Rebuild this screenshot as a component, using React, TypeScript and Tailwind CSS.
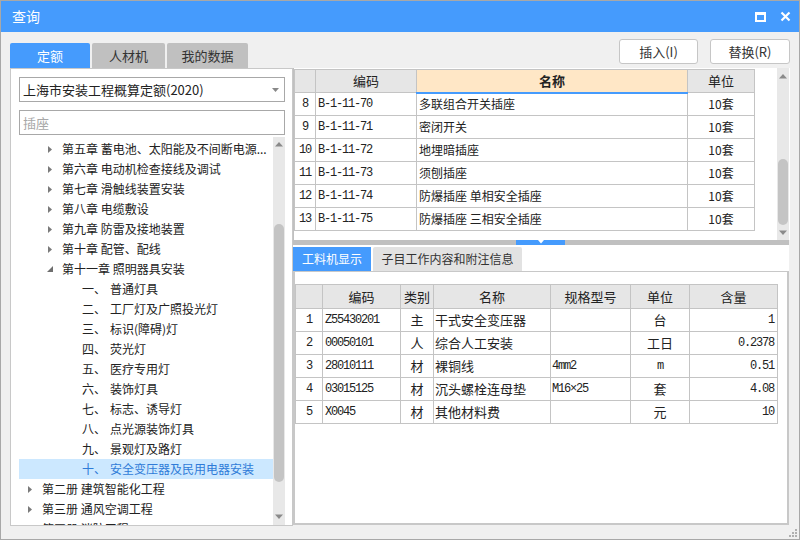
import React from "react";

const CJK = "font-['Microsoft_YaHei','Noto_Sans_CJK_SC',sans-serif]";
const MONO = "font-['Liberation_Mono','Noto_Sans_CJK_SC',monospace] tracking-[-1.2px]";

function Arrow({ open }: { open?: boolean }) {
  if (open)
    return (
      <svg width="8" height="8" viewBox="0 0 8 8" className="block">
        <path d="M7 1 L7 7 L1 7 Z" fill="#6e6e6e" />
      </svg>
    );
  return (
    <svg width="8" height="9" viewBox="0 0 8 9" className="block">
      <path d="M2 1 L6 4.5 L2 8 Z" fill="#7a7a7a" />
    </svg>
  );
}

type Node = { level: number; text: string; arrow?: "closed" | "open"; prefix?: string; sel?: boolean };

const tree: Node[] = [
  { level: 1, text: "第五章 蓄电池、太阳能及不间断电源...", arrow: "closed" },
  { level: 1, text: "第六章 电动机检查接线及调试", arrow: "closed" },
  { level: 1, text: "第七章 滑触线装置安装", arrow: "closed" },
  { level: 1, text: "第八章 电缆敷设", arrow: "closed" },
  { level: 1, text: "第九章 防雷及接地装置", arrow: "closed" },
  { level: 1, text: "第十章 配管、配线", arrow: "closed" },
  { level: 1, text: "第十一章 照明器具安装", arrow: "open" },
  { level: 2, prefix: "一、", text: "普通灯具" },
  { level: 2, prefix: "二、", text: "工厂灯及广照投光灯" },
  { level: 2, prefix: "三、", text: "标识(障碍)灯" },
  { level: 2, prefix: "四、", text: "荧光灯" },
  { level: 2, prefix: "五、", text: "医疗专用灯" },
  { level: 2, prefix: "六、", text: "装饰灯具" },
  { level: 2, prefix: "七、", text: "标志、诱导灯" },
  { level: 2, prefix: "八、", text: "点光源装饰灯具" },
  { level: 2, prefix: "九、", text: "景观灯及路灯" },
  { level: 2, prefix: "十、", text: "安全变压器及民用电器安装", sel: true },
  { level: 0, text: "第二册 建筑智能化工程", arrow: "closed" },
  { level: 0, text: "第三册 通风空调工程", arrow: "closed" },
  { level: 0, text: "第四册 消防工程", arrow: "closed" },
];

const topRows = [
  ["8", "B-1-11-70", "多联组合开关插座", "10套"],
  ["9", "B-1-11-71", "密闭开关", "10套"],
  ["10", "B-1-11-72", "地埋暗插座", "10套"],
  ["11", "B-1-11-73", "须刨插座", "10套"],
  ["12", "B-1-11-74", "防爆插座 单相安全插座", "10套"],
  ["13", "B-1-11-75", "防爆插座 三相安全插座", "10套"],
];

const botRows = [
  ["1", "Z55430201", "主", "干式安全变压器", "", "台", "1"],
  ["2", "00050101", "人", "综合人工安装", "", "工日", "0.2378"],
  ["3", "28010111", "材", "裸铜线", "4mm2", "m", "0.51"],
  ["4", "03015125", "材", "沉头螺栓连母垫", "M16×25", "套", "4.08"],
  ["5", "X0045", "材", "其他材料费", "", "元", "10"],
];

function UpTri() {
  return (
    <svg width="10" height="6" viewBox="0 0 10 6" className="block">
      <path d="M1 5.5 L5 1 L9 5.5 Z" fill="#8a8a8a" />
    </svg>
  );
}
function DownTri({ color = "#8a8a8a" }: { color?: string }) {
  return (
    <svg width="10" height="6" viewBox="0 0 10 6" className="block">
      <path d="M1 0.5 L5 5 L9 0.5 Z" fill={color} />
    </svg>
  );
}

export default function App() {
  return (
    <div className={`w-[800px] h-[540px] box-border border border-[#a8a8a8] bg-[#f0f0f0] flex flex-col overflow-hidden ${CJK} text-[#222]`}>
      {/* title bar */}
      <div className="h-[31px] bg-[#459bfd] flex items-center justify-between pl-[11px] pr-[8px] shrink-0">
        <span className="text-white text-[14px]">查询</span>
        <div className="flex items-center gap-[14px]">
          <div className="w-[11px] h-[10px] border-2 border-t-[3px] border-white box-border" />
          <svg width="11" height="11" viewBox="0 0 11 11" className="block">
            <path d="M1.5 1.5 L9.5 9.5 M9.5 1.5 L1.5 9.5" stroke="#fff" strokeWidth="2.2" />
          </svg>
        </div>
      </div>

      {/* tabs + buttons */}
      <div className="h-[36px] flex items-end justify-between pl-[9px] pr-[9px] shrink-0">
        <div className="flex gap-[2px] items-end">
          <div className="w-[80px] h-[25px] bg-[#459bfd] text-white text-[13px] flex items-center justify-center rounded-t-[2px]">定额</div>
          <div className="w-[73px] h-[25px] bg-[#c0c0c0] text-[#333] text-[13px] flex items-center justify-center rounded-t-[2px]">人材机</div>
          <div className="w-[81px] h-[25px] bg-[#c0c0c0] text-[#333] text-[13px] flex items-center justify-center rounded-t-[2px]">我的数据</div>
        </div>
        <div className="flex gap-[12px] self-start mt-[7px]">
          <div className="w-[79px] h-[25px] bg-white border border-[#c6c6c6] rounded-[3px] text-[13px] flex items-center justify-center text-[#333]">插入(I)</div>
          <div className="w-[80px] h-[25px] bg-white border border-[#c6c6c6] rounded-[3px] text-[13px] flex items-center justify-center text-[#333]">替换(R)</div>
        </div>
      </div>

      {/* main */}
      <div className="flex pl-[9px] h-[458px] shrink-0">
        {/* left panel */}
        <div className="w-[283px] h-full bg-white border border-[#c8c8c8] box-border flex flex-col pl-[8px] pr-[6px] pt-[8px]">
          <div className="h-[25px] w-[266px] border border-[#a8a8a8] box-border flex items-center justify-between pl-[3px] pr-[5px]">
            <span className="text-[13px] text-[#222]">上海市安装工程概算定额(2020)</span>
            <svg width="7" height="4" viewBox="0 0 7 4" className="block"><path d="M0 0 L7 0 L3.5 4 Z" fill="#888" /></svg>
          </div>
          <div className="h-[25px] w-[266px] mt-[8px] border border-[#a8a8a8] box-border flex items-center pl-[3px]">
            <span className="text-[13px] text-[#a8a8a8]">插座</span>
          </div>
          <div className="flex mt-[2px] h-[388px]">
            <div className="w-[254px] overflow-hidden pt-[2px]">
              {tree.map((n, i) => (
                <div
                  key={i}
                  className={`h-[20px] flex items-center text-[12px] whitespace-nowrap ${n.sel ? "bg-[#cce8ff] text-[#2f7bd8]" : "text-[#222]"}`}
                  style={{ paddingLeft: n.level === 2 ? 63 : 7 + n.level * 20 }}
                >
                  {n.arrow ? (
                    <span className="w-[16px] shrink-0 flex items-center">
                      <Arrow open={n.arrow === "open"} />
                    </span>
                  ) : null}
                  {n.prefix ? <span className="w-[28px] shrink-0">{n.prefix}</span> : null}
                  <span>{n.text}</span>
                </div>
              ))}
            </div>
            <div className="w-[12px] h-full bg-[#e8e8e8] flex flex-col items-center">
              <div className="h-[12px] flex items-center mt-[1px]"><UpTri /></div>
              <div className="flex-1 w-full relative">
                <div className="absolute left-[1px] right-[1px] top-[74px] h-[258px] bg-[#c4c4c4] rounded-full" />
              </div>
              <div className="h-[12px] flex items-center mb-[2px]"><DownTri /></div>
            </div>
          </div>
        </div>

        {/* right panel */}
        <div className="w-[497px] h-full flex flex-col">
          {/* top table */}
          <div className="h-[172px] bg-white flex border-l border-[#c0c0c0] shrink-0">
            <div className="flex-1 pt-[1px]">
              <table className="border-collapse table-fixed text-[12px]">
                <colgroup>
                  <col className="w-[21px]" />
                  <col className="w-[101px]" />
                  <col className="w-[271px]" />
                  <col className="w-[67px]" />
                </colgroup>
                <thead>
                  <tr className="h-[23px]">
                    <th className="border border-[#c4c4c4] bg-[#e6e6e6] font-normal"></th>
                    <th className="border border-[#c4c4c4] bg-[#e6e6e6] font-normal text-[13px]">编码</th>
                    <th className="border border-[#c4c4c4] border-b-2 border-b-[#459bfd] bg-[#ffe7c6] font-bold text-[13px]">名称</th>
                    <th className="border border-[#c4c4c4] bg-[#e6e6e6] font-normal text-[13px]">单位</th>
                  </tr>
                </thead>
                <tbody>
                  {topRows.map((r) => (
                    <tr key={r[0]} className="h-[23px]">
                      <td className={`border border-[#c4c4c4] text-center p-0 ${MONO}`}>{r[0]}</td>
                      <td className={`border border-[#c4c4c4] pl-[2px] ${MONO}`}>{r[1]}</td>
                      <td className="border border-[#c4c4c4] pl-[2px] text-[12px] whitespace-nowrap">{r[2]}</td>
                      <td className="border border-[#c4c4c4] text-center text-[12px]">{r[3]}</td>
                    </tr>
                  ))}
                </tbody>
              </table>
            </div>
            <div className="w-[12px] h-full bg-[#e8e8e8] flex flex-col items-center mr-[1px]">
              <div className="h-[12px] flex items-center mt-[2px]"><UpTri /></div>
              <div className="flex-1 w-full relative">
                <div className="absolute left-[1px] right-[1px] top-[77px] h-[66px] bg-[#c4c4c4] rounded-full" />
              </div>
              <div className="h-[12px] flex items-center mb-[1px]"><DownTri /></div>
            </div>
          </div>

          {/* splitter */}
          <div className="h-[5px] bg-[#c0c0c0] shrink-0 relative flex w-[496px]">
            <div className="ml-[223px] w-[49px] h-full bg-[#459bfd] flex justify-center items-start">
              <svg width="8" height="4" viewBox="0 0 8 4" className="block"><path d="M1 0 L7 0 L4 3.5 Z" fill="#fff" /></svg>
            </div>
          </div>

          {/* bottom area */}
          <div className="flex-1 flex flex-col w-[496px]">
            <div className="bg-white pt-[2px] flex gap-[2px] border-b border-[#c8c8c8] shrink-0">
              <div className="w-[78px] h-[24px] bg-[#459bfd] text-white text-[12px] flex items-center justify-center">工料机显示</div>
              <div className="w-[149px] h-[24px] bg-[#e2e2e2] text-[#333] text-[12px] flex items-center justify-center rounded-t-[2px]">子目工作内容和附注信息</div>
            </div>
            <div className="flex-1 bg-white border-l-2 border-r-2 border-b-2 border-[#c8c8c8] mb-[1px] pt-[12px] w-[496px] box-border">
              <table className="border-collapse table-fixed text-[12px]">
                <colgroup>
                  <col className="w-[27px]" />
                  <col className="w-[78px]" />
                  <col className="w-[33px]" />
                  <col className="w-[117px]" />
                  <col className="w-[80px]" />
                  <col className="w-[59px]" />
                  <col className="w-[88px]" />
                </colgroup>
                <thead>
                  <tr className="h-[24px]">
                    {["", "编码", "类别", "名称", "规格型号", "单位", "含量"].map((h, i) => (
                      <th key={i} className="border border-[#c4c4c4] bg-[#e6e6e6] font-normal text-[13px] text-[#222]">{h}</th>
                    ))}
                  </tr>
                </thead>
                <tbody>
                  {botRows.map((r) => (
                    <tr key={r[0]} className="h-[23px]">
                      <td className={`border border-[#c4c4c4] text-center p-0 ${MONO}`}>{r[0]}</td>
                      <td className={`border border-[#c4c4c4] pl-[2px] ${MONO}`}>{r[1]}</td>
                      <td className="border border-[#c4c4c4] text-center text-[13px]">{r[2]}</td>
                      <td className="border border-[#c4c4c4] pl-[1px] text-[13px] whitespace-nowrap">{r[3]}</td>
                      <td className={`border border-[#c4c4c4] pl-[1px] ${MONO}`}>{r[4]}</td>
                      <td className={`border border-[#c4c4c4] text-center ${r[5] === "m" ? MONO : "text-[13px]"}`}>{r[5]}</td>
                      <td className={`border border-[#c4c4c4] text-right pr-[3px] ${MONO}`}>{r[6]}</td>
                    </tr>
                  ))}
                </tbody>
              </table>
            </div>
          </div>
        </div>
      </div>

      {/* bottom strip with grip */}
      <div className="flex-1 flex justify-end items-end pr-[2px] pb-[2px]">
        <svg width="8" height="8" viewBox="0 0 8 8" className="block">
          <rect x="6" y="0" width="2" height="2" fill="#b0b0b0" />
          <rect x="3" y="3" width="2" height="2" fill="#b0b0b0" />
          <rect x="6" y="3" width="2" height="2" fill="#b0b0b0" />
          <rect x="0" y="6" width="2" height="2" fill="#b0b0b0" />
          <rect x="3" y="6" width="2" height="2" fill="#b0b0b0" />
          <rect x="6" y="6" width="2" height="2" fill="#b0b0b0" />
        </svg>
      </div>
    </div>
  );
}
